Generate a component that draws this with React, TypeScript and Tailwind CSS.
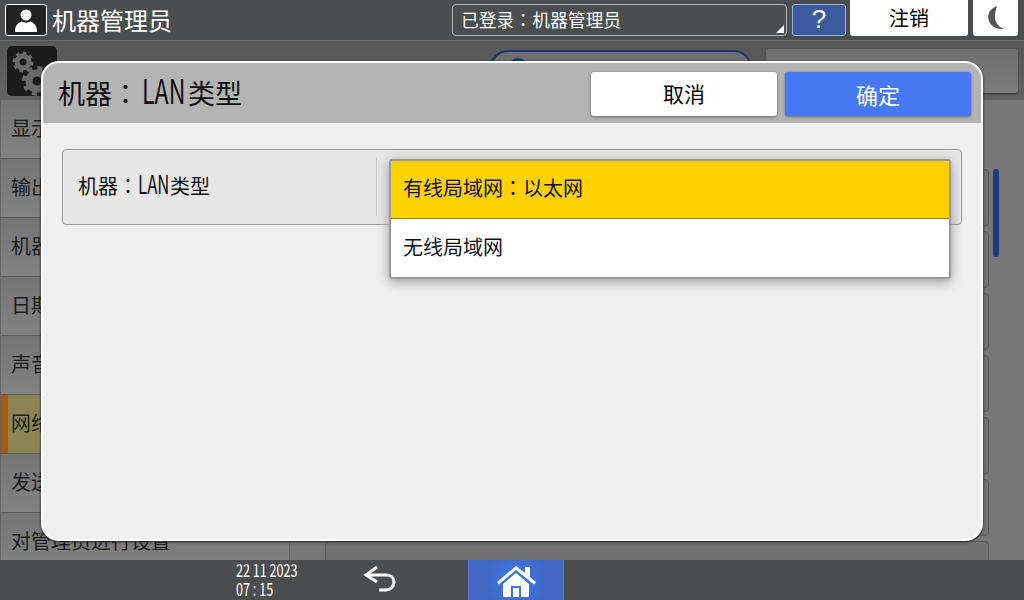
import React from 'react';

const font = { fontFamily: '"Noto Sans CJK SC", sans-serif' };
const tcFont = { fontFamily: '"Noto Sans CJK TC", sans-serif' };

const menu = ['显示/输入', '输出', '机器', '日期/时间', '声音', '网络', '发送', '对管理员进行设置'];

// full-width colon sits centred in the device font, TC has that form
function Colon() {
  return <span style={tcFont}>：</span>;
}

function LanLabel({ lanWidth }: { lanWidth: string }) {
  return (
    <>
      机器
      <Colon />
      <span className={lanWidth}>LAN</span>
      类型
    </>
  );
}

function UserIcon() {
  return (
    <svg viewBox="0 0 30 24" className="w-[30px] h-[24px]" fill="#fff">
      <circle cx="15" cy="7" r="5.5" />
      <path d="M4 23c0-6 4-9 7-9.500 2 1.500 6 1.500 8 0 3 .5 7 3.500 7 9.500 0 .6-.5 1-1 1H5c-.5 0-1-.4-1-1z" />
    </svg>
  );
}

function GearIcon() {
  return (
    <svg viewBox="0 0 50 50" className="w-[50px] h-[50px]">
      <rect width="50" height="50" rx="5" fill="#1c1c1c" />
      <g fill="none" stroke="#6a6a6a">
        <circle cx="16" cy="16" r="6" strokeWidth="5" />
        <circle cx="16" cy="16" r="9" strokeWidth="3" strokeDasharray="3.500 3.500" />
        <circle cx="30" cy="35" r="8" strokeWidth="7" />
        <circle cx="30" cy="35" r="13" strokeWidth="4" strokeDasharray="5 5.200" />
      </g>
    </svg>
  );
}

function BackIcon() {
  return (
    <svg viewBox="0 0 34 28" className="w-[34px] h-[28px]" fill="none" stroke="#fff" strokeWidth="3">
      <path d="M3 9h20c5 0 8 3 8 7s-3 8-8 8h-7" />
      <path d="M14 1 3 9l11 7" strokeLinejoin="miter" />
    </svg>
  );
}

function HomeIcon() {
  return (
    <svg viewBox="0 0 40 36" className="w-[40px] h-[36px]" fill="#fff">
      <path d="M1 20 20 4l9 7V5h5v10l6 5-2 2.500L20 8 3 22.500z" />
      <path d="M7 22 20 11l13 11v13H25V24H15v11H7z" />
      <path d="M17 26h6v9h-6z" />
    </svg>
  );
}

export default function App() {
  return (
    <div className="relative w-[1024px] h-[600px] overflow-hidden flex flex-col bg-[#777777]" style={font}>
      {/* top bar */}
      <div className="h-[41px] shrink-0 flex items-center bg-[#4c4d4f] border-b border-[#6a6a6a] pl-[5px] pb-[1px]">
        <div className="w-[42px] h-[32px] flex items-center justify-center rounded-[3px] border border-white bg-[#222222]">
          <UserIcon />
        </div>
        <span className="ml-[5px] w-[399px] text-[24px] leading-none text-white">机器管理员</span>
        <div className="relative w-[335px] h-[32px] ml-[1px] flex items-center pl-[8px] rounded-[4px] border border-[#b5b5b5] text-[17.8px] text-white">
          已登录
          <Colon />
          机器管理员
          <div className="absolute right-[2px] bottom-[2px] w-0 h-0 border-l-[8px] border-b-[8px] border-l-transparent border-b-white" />
        </div>
        <div className="w-[54px] h-[32px] ml-[5px] flex items-center justify-center rounded-[3px] border border-[#9fb0d8] bg-[#3c5a9e] text-[26px] text-white" style={{ fontFamily: '"Liberation Sans", sans-serif' }}>?</div>
        <div className="w-[118px] h-[36px] ml-[4px] mb-[4px] flex items-center justify-center rounded-b-[3px] bg-white text-[20px] text-black">注销</div>
        <div className="w-[45px] h-[36px] ml-[5px] mb-[4px] flex items-center justify-center rounded-b-[3px] bg-white">
          <svg viewBox="0 0 20 24" className="w-[22px] h-[26px]" fill="#555555">
            <path d="M11 1C5 3 2 8 3 13c1 6 7 10 14 9-4-2-8-5-8-11 0-4 1-7 2-10z" />
          </svg>
        </div>
      </div>

      {/* screen header, dimmed behind the dialog */}
      <div className="h-[59px] shrink-0 flex items-center pl-[7px] bg-gradient-to-b from-[#575757] to-[#626262]">
        <GearIcon />
        <span className="ml-[13px] w-[420px] text-[21px] leading-none text-[#222222]">系统设置</span>
        <div className="w-[262px] h-[44px] mt-[3px] flex items-start pl-[16px] pt-[6px] rounded-t-[18px] border-2 border-[#1d3570] bg-[#6e6e6e]">
          <div className="w-[20px] h-[20px] rounded-full bg-[#1d3570]" />
        </div>
        <div className="w-[252px] h-[44px] ml-[14px] mt-[1px] rounded-[3px] bg-gradient-to-b from-[#6e6e6e] to-[#7c7c7c] shadow-[0_1px_2px_#333]" />
      </div>

      {/* settings list */}
      <div className="flex-1 min-h-0 flex overflow-hidden">
        <div className="w-[290px] shrink-0 border-l border-r border-[#666666] flex flex-col">
          {menu.map((item, i) => (
            <div
              key={item}
              className={
                i === 5
                  ? 'relative h-[59px] shrink-0 flex items-center pl-[10px] pb-[2px] border-b border-[#5c5c5c] bg-[#8c8657] text-[20px] text-[#1f1f1f]'
                  : 'relative h-[59px] shrink-0 flex items-center pl-[10px] pb-[2px] border-b border-[#5c5c5c] bg-gradient-to-b from-[#757575] to-[#828282] text-[20px] text-[#1f1f1f]'
              }
            >
              {i === 5 && <div className="absolute left-0 top-0 bottom-0 w-[7px] bg-[#a85c0a]" />}
              {item}
            </div>
          ))}
        </div>
        <div className="flex-1 flex pl-[35px] pt-[69px] bg-[#777777]">
          <div className="w-[664px] flex flex-col gap-[5px]">
            {[0, 1, 2, 3, 4, 5, 6].map((i) => (
              <div key={i} className="h-[57px] shrink-0 rounded-[4px] border border-[#5c5c5c] bg-[#727272]" />
            ))}
          </div>
          <div className="w-[6px] h-[88px] ml-[4px] rounded-full bg-[#1d3a7c]" />
        </div>
      </div>

      {/* bottom bar */}
      <div className="h-[40px] shrink-0 flex bg-[#4c4d4f]">
        <div className="ml-[236px] w-[62px] text-[18px] leading-[19px] whitespace-nowrap text-white">
          <div className="origin-left scale-x-[0.7]">22 11 2023</div>
          <div className="origin-left scale-x-[0.7]">07 : 15</div>
        </div>
        <div className="w-[50px] ml-[65px] flex items-center">
          <BackIcon />
        </div>
        <div className="w-[96px] ml-[55px] flex items-center justify-center border-x border-[#5a7cc8] bg-[radial-gradient(circle,#3f78ee_0%,#4169c4_60%)]">
          <HomeIcon />
        </div>
      </div>

      {/* dialog */}
      <div className="absolute left-[41px] top-[61px] w-[942px] h-[480px] overflow-hidden rounded-[18px] border-2 border-white bg-[#efefef] shadow-[0_1px_3px_#222]">
        <div className="h-[60px] flex items-center bg-[#b4b4b4] pl-[15px]">
          <span className="flex-1 pb-[6px] text-[27px] leading-none text-[#111111]">
            <LanLabel lanWidth="inline-block w-[46px] ml-[3px] text-[34px] leading-none origin-left scale-x-[0.68] whitespace-nowrap" />
          </span>
          <div className="w-[186px] h-[44px] mt-[2px] flex items-center justify-center rounded-[3px] bg-white text-[21px] text-black shadow-[0_1px_3px_#666]">取消</div>
          <div className="w-[186px] h-[44px] mt-[2px] ml-[8px] mr-[10px] flex items-center justify-center rounded-[3px] bg-[#4679f2] text-[22px] text-white shadow-[0_1px_3px_#666]">确定</div>
        </div>
        <div className="relative pl-[19px] pt-[26px]">
          <div className="w-[900px] h-[76px] flex items-start rounded-[4px] border border-[#9c9c9c] bg-[#e6e6e6]">
            <div className="w-[314px] h-[58px] mt-[8px] flex items-center pl-[15px] pb-[3px] border-r border-[#cccccc] text-[20px] whitespace-nowrap text-[#111111]">
              <span>
                <LanLabel lanWidth="inline-block w-[32px] text-[25px] leading-none origin-left scale-x-[0.67] whitespace-nowrap" />
              </span>
            </div>
          </div>
          {/* dropdown */}
          <div className="absolute left-[346px] top-[36px] w-[562px] h-[120px] overflow-hidden rounded-[3px] border-2 border-[#9a9a9a] bg-white shadow-[0_3px_12px_#999]">
            <div className="h-[58px] flex items-center pl-[12px] pb-[3px] border-b border-[#9c8000] bg-[#ffd200] text-[20px] text-[#111111]">
              有线局域网
              <Colon />
              以太网
            </div>
            <div className="h-[58px] flex items-center pl-[12px] pb-[3px] text-[20px] text-[#111111]">无线局域网</div>
          </div>
        </div>
      </div>
    </div>
  );
}
